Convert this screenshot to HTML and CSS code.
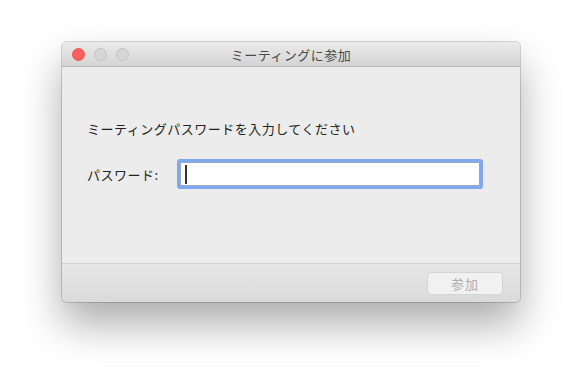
FILE: index.html
```html
<!DOCTYPE html>
<html lang="ja">

<head>
  <meta charset="UTF-8" />
  <meta name="viewport" content="width=device-width, initial-scale=1" />
  <title>ミーティングに参加</title>
  <link rel="stylesheet" href="styles.css">
</head>

<body>
  <div class="window">
    <div class="titlebar">
      <div class="lights">
        <span class="light close"></span>
        <span class="light"></span>
        <span class="light"></span>
      </div>
      <div class="title">ミーティングに参加</div>
      <div></div>
    </div>

    <div class="content">
      <p class="prompt">ミーティングパスワードを入力してください</p>
      <div class="row">
        <label class="label">パスワード:</label>
        <div class="field"><span class="caret"></span></div>
      </div>
    </div>

    <div class="footer">
      <button class="join" disabled>参加</button>
    </div>
  </div>
</body>

</html>
```

FILE: styles.css
```css
html {
  height: 100%;
}

body {
  margin: 0;
  min-height: 100%;
  padding-top: 42px;
  box-sizing: border-box;
  background-color: #fff;
  font-family: "Noto Sans CJK JP", "Noto Sans", sans-serif;
  color: #222;
}

.window {
  width: 458px;
  height: 260px;
  margin-left: 62px;
  display: flex;
  flex-direction: column;
  background-color: #ececec;
  border-radius: 5px;
  overflow: hidden;
  box-shadow: 0 0 0 1px rgba(0, 0, 0, 0.16), 0 22px 42px rgba(0, 0, 0, 0.33);
}

.titlebar {
  height: 24px;
  display: grid;
  grid-template-columns: 1fr auto 1fr;
  align-items: center;
  background: linear-gradient(#ebebeb, #d4d4d4);
  border-bottom: 1px solid #b8b8b8;
}

.lights {
  display: flex;
  gap: 9px;
  padding-left: 10px;
}

.light {
  width: 11px;
  height: 11px;
  border-radius: 50%;
  background-color: #d6d6d6;
  border: 1px solid #c4c4c4;
}

.light.close {
  background-color: #fc605c;
  border-color: #f4554f;
}

.title {
  font-size: 13px;
  letter-spacing: 0.5px;
  color: #4a4a4a;
}

.content {
  flex: 1;
  padding: 53px 0 0 25px;
}

.prompt {
  margin: 0;
  font-size: 13px;
  line-height: 18px;
  letter-spacing: 0.5px;
}

.row {
  display: flex;
  align-items: center;
  margin-top: 24px;
}

.label {
  width: 93px;
  font-size: 13px;
  letter-spacing: 0.5px;
}

.field {
  box-sizing: border-box;
  width: 300px;
  height: 24px;
  background-color: #fff;
  border: 1px solid #9aa8c0;
  box-shadow: 0 0 0 3px #7ea8f0;
  border-radius: 1px;
  display: flex;
  align-items: center;
  padding-left: 4px;
}

.caret {
  width: 1.5px;
  height: 19px;
  background-color: #333;
}

.footer {
  height: 38px;
  display: flex;
  align-items: center;
  justify-content: flex-end;
  padding-right: 17px;
  background: linear-gradient(#e7e7e7, #dadada);
  border-top: 1px solid #d2d2d2;
}

.join {
  width: 76px;
  height: 23px;
  font-family: inherit;
  font-size: 13px;
  letter-spacing: 1px;
  color: #adadad;
  background-color: #f1f1f1;
  border: 1px solid #d4d4d4;
  border-radius: 4px;
}
```
